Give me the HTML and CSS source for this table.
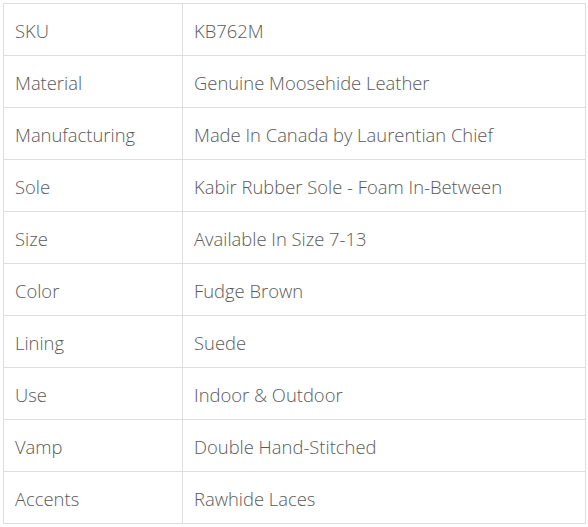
FILE: index.html
```html
<!DOCTYPE html>
<html>
<head>
<meta charset="utf-8">
<link rel="stylesheet" href="styles.css">
</head>
<body>
<table class="specs">
  <tbody>
    <tr><td class="label">SKU</td><td class="value">KB762M</td></tr>
    <tr><td class="label">Material</td><td class="value">Genuine Moosehide Leather</td></tr>
    <tr><td class="label">Manufacturing</td><td class="value">Made In Canada by Laurentian Chief</td></tr>
    <tr><td class="label">Sole</td><td class="value">Kabir Rubber Sole - Foam In-Between</td></tr>
    <tr><td class="label">Size</td><td class="value">Available In Size 7-13</td></tr>
    <tr><td class="label">Color</td><td class="value">Fudge Brown</td></tr>
    <tr><td class="label">Lining</td><td class="value">Suede</td></tr>
    <tr><td class="label">Use</td><td class="value">Indoor &amp; Outdoor</td></tr>
    <tr><td class="label">Vamp</td><td class="value">Double Hand-Stitched</td></tr>
    <tr><td class="label">Accents</td><td class="value">Rawhide Laces</td></tr>
  </tbody>
</table>
</body>
</html>
```

FILE: styles.css
```css
html, body {
  margin: 0;
  padding: 0;
  background: #fff;
}
body {
  padding: 3px;
  font-family: "Open Sans", Lato, sans-serif;
  color: #5a5a5a;
}
.specs {
  border-collapse: collapse;
  width: 583px;
  table-layout: fixed;
}
.specs td {
  border: 1px solid #dedede;
  height: 52px;
  padding: 1px 11px 0;
  font-size: 18.4px;
  font-weight: 300;
  vertical-align: middle;
  box-sizing: border-box;
}
.specs .label {
  width: 179px;
}
```
